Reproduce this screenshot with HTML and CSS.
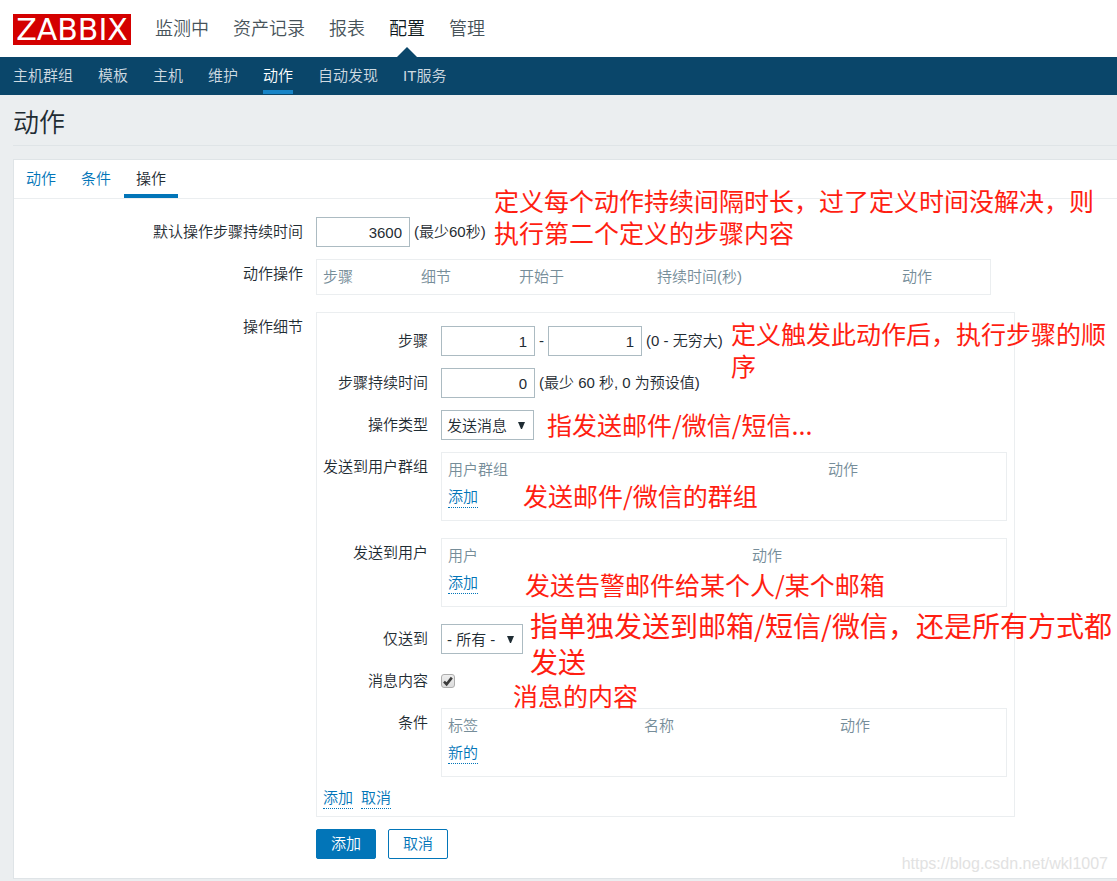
FILE: index.html
```html
<!DOCTYPE html>
<html lang="zh-CN">
<head>
<meta charset="utf-8">
<title>动作</title>
<link rel="stylesheet" href="styles.css">
</head>
<body>
<header class="top">
  <a class="logo" href="#">ZABBIX</a>
  <nav class="main-nav">
    <a href="#">监测中</a>
    <a href="#">资产记录</a>
    <a href="#">报表</a>
    <a class="active" href="#">配置</a>
    <a href="#">管理</a>
  </nav>
</header>
<nav class="sub-nav">
  <a href="#">主机群组</a>
  <a href="#">模板</a>
  <a href="#">主机</a>
  <a href="#">维护</a>
  <a class="active" href="#">动作</a>
  <a href="#">自动发现</a>
  <a href="#">IT服务</a>
</nav>
<main class="page">
  <h1 class="title">动作</h1>
  <div class="panel">
    <nav class="tabs">
      <a href="#">动作</a>
      <a href="#">条件</a>
      <a class="active" href="#">操作</a>
    </nav>
    <form class="form">
      <label class="label" for="period">默认操作步骤持续时间</label>
      <div class="field">
        <input class="number" id="period" type="text" value="3600">
        <span>(最少60秒)</span>
        <p class="note note-period">定义每个动作持续间隔时长，过了定义时间没解决，则<br>执行第二个定义的步骤内容</p>
      </div>

      <span class="label">动作操作</span>
      <table class="box operations">
        <colgroup><col class="w98"><col class="w98"><col class="w138"><col class="w245"><col></colgroup>
        <tr><th>步骤</th><th>细节</th><th>开始于</th><th>持续时间(秒)</th><th>动作</th></tr>
      </table>

      <span class="label">操作细节</span>
      <div class="details">
        <div class="rows">
          <label class="label" for="step-from">步骤</label>
          <div class="field">
            <input class="number" id="step-from" type="text" value="1">
            <span>-</span>
            <input class="number" type="text" value="1" aria-label="步骤">
            <span>(0 - 无穷大)</span>
            <p class="note note-steps">定义触发此动作后，执行步骤的顺<br>序</p>
          </div>

          <label class="label" for="step-period">步骤持续时间</label>
          <div class="field">
            <input class="number" id="step-period" type="text" value="0">
            <span>(最少 60 秒, 0 为预设值)</span>
          </div>

          <label class="label" for="op-type">操作类型</label>
          <div class="field">
            <span class="select select-type">
              <select id="op-type"><option>发送消息</option></select>
              <svg width="7" height="7" viewBox="0 0 7 7"><path d="M0 0h7L4 7H3z"/></svg>
            </span>
            <p class="note note-type">指发送邮件/微信/短信...</p>
          </div>

          <span class="label">发送到用户群组</span>
          <div class="field">
            <table class="box">
              <colgroup><col class="w380"><col></colgroup>
              <tr><th>用户群组</th><th>动作</th></tr>
              <tr><td colspan="2"><a class="link" href="#">添加</a></td></tr>
            </table>
            <p class="note note-groups">发送邮件/微信的群组</p>
          </div>

          <span class="label">发送到用户</span>
          <div class="field">
            <table class="box">
              <colgroup><col class="w304"><col></colgroup>
              <tr><th>用户</th><th>动作</th></tr>
              <tr><td colspan="2"><a class="link" href="#">添加</a></td></tr>
            </table>
            <p class="note note-users">发送告警邮件给某个人/某个邮箱</p>
          </div>

          <label class="label" for="media">仅送到</label>
          <div class="field">
            <span class="select select-media">
              <select id="media"><option>- 所有 -</option></select>
              <svg width="7" height="7" viewBox="0 0 7 7"><path d="M0 0h7L4 7H3z"/></svg>
            </span>
            <p class="note note-media">指单独发送到邮箱/短信/微信，还是所有方式都<br>发送</p>
          </div>

          <label class="label" for="message">消息内容</label>
          <div class="field">
            <span class="check">
              <input id="message" type="checkbox" checked>
              <svg width="14" height="14" viewBox="0 0 14 14"><path d="M3 7.6l2.6 2.6L10.8 3.6" fill="none" stroke="#3c3c3c" stroke-width="2.6"/></svg>
            </span>
            <p class="note note-message">消息的内容</p>
          </div>

          <span class="label">条件</span>
          <table class="box">
            <colgroup><col class="w196"><col class="w196"><col></colgroup>
            <tr><th>标签</th><th>名称</th><th>动作</th></tr>
            <tr><td colspan="3"><a class="link" href="#">新的</a></td></tr>
          </table>
        </div>
        <div class="links">
          <a class="link" href="#">添加</a>
          <a class="link" href="#">取消</a>
        </div>
      </div>

      <div class="buttons">
        <button class="button primary" type="submit">添加</button>
        <button class="button" type="button">取消</button>
      </div>
    </form>
    <p class="watermark">https://blog.csdn.net/wkl1007</p>
  </div>
</main>
</body>
</html>
```
FILE: styles.css
```css
* { box-sizing: border-box; }

body {
  margin: 0;
  background: #ebeef0;
  color: #1f2c33;
  font: 350 15px/20px "Liberation Sans", "Noto Sans CJK SC", sans-serif;
  overflow-x: hidden;
}

a { color: #0275b8; text-decoration: none; }

.top {
  display: flex;
  align-items: center;
  gap: 24px;
  height: 57px;
  padding: 0 13px;
  background: #fff;
}

.logo {
  width: 118px;
  margin-top: 2px;
  background: #d40000;
  color: #fff;
  font: 400 30px/31px "DejaVu Sans", sans-serif;
  text-align: center;
}

.main-nav { display: flex; gap: 24px; align-self: stretch; }
.main-nav a {
  position: relative;
  padding-top: 2px;
  color: #47535a;
  font-size: 18px;
  line-height: 55px;
}
.main-nav .active { color: #0f1a20; }
.main-nav .active::after {
  content: "";
  position: absolute;
  left: 50%;
  bottom: 0;
  margin-left: -10px;
  border: 10px solid transparent;
  border-top: 0;
  border-bottom-color: #0a466a;
}

.sub-nav {
  display: flex;
  gap: 25px;
  height: 38px;
  padding: 0 13px;
  background: #0a466a;
}
.sub-nav a {
  height: 37px;
  border-bottom: 4px solid transparent;
  color: #cfdae1;
  line-height: 37px;
}
.sub-nav .active { border-color: #1784c7; color: #fff; }

.page { padding: 0 0 3px 13px; }

.title {
  margin: 0 0 13px;
  padding: 10px 0 3px;
  border-bottom: 1px solid #dfe4e7;
  font-size: 26px;
  font-weight: 350;
  line-height: 37px;
}

.panel {
  position: relative;
  border: 1px solid #dfe4e7;
  border-right: 0;
  background: #fff;
}

.tabs {
  display: flex;
  gap: 1px;
  border-bottom: 1px solid #ebeef0;
}
.tabs a {
  height: 38px;
  padding: 0 12px;
  border-bottom: 4px solid transparent;
  line-height: 37px;
}
.tabs .active { border-color: #0275b8; color: #1f2c33; }

.form {
  display: grid;
  grid-template-columns: 289px 1fr;
  gap: 12px 13px;
  padding: 18px 0 19px;
}
.label { line-height: 30px; text-align: right; }

.field {
  position: relative;
  display: flex;
  align-items: center;
  gap: 4px;
  min-height: 30px;
}
.number {
  width: 94px;
  height: 30px;
  padding: 0 7px;
  border: 1px solid #acbbc2;
  background: #fff;
  color: inherit;
  font: inherit;
  text-align: right;
}

.box {
  width: 100%;
  margin-bottom: 5px;
  padding: 0 6px;
  border: 1px solid #ebeef0;
  border-spacing: 0;
  table-layout: fixed;
}
.operations { max-width: 675px; }
.box th {
  padding: 7px 0;
  color: #768d99;
  font-weight: inherit;
  text-align: left;
}
.box td { padding: 0 0 12px; vertical-align: top; }
.w98 { width: 98px; }
.w138 { width: 138px; }
.w245 { width: 245px; }
.w380 { width: 380px; }
.w304 { width: 304px; }
.w196 { width: 196px; }

.link {
  display: inline-block;
  border-bottom: 1px dotted #0275b8;
  vertical-align: top;
}

.details {
  max-width: 699px;
  padding: 13px 7px 7px 6px;
  border: 1px solid #ebeef0;
}
.rows {
  display: grid;
  grid-template-columns: 105px 1fr;
  gap: 12px 13px;
}
.links { display: flex; gap: 8px; margin-top: 6px; }

.select { position: relative; }
.select select {
  display: block;
  width: 100%;
  height: 30px;
  padding: 2px 5px 0;
  border: 1px solid #acbbc2;
  border-radius: 0;
  background: #fff;
  color: inherit;
  font: inherit;
  appearance: none;
}
.select svg {
  position: absolute;
  right: 9px;
  top: 12px;
  fill: #1f2c33;
  pointer-events: none;
}
.select-type { width: 93px; }
.select-media { width: 82px; }

.check { position: relative; width: 14px; height: 14px; }
.check input {
  display: block;
  width: 14px;
  height: 14px;
  margin: 0;
  border: 1px solid #adadad;
  border-radius: 3px;
  background: linear-gradient(#eee, #dcdcdc);
  appearance: none;
}
.check svg { position: absolute; left: 0; top: 0; pointer-events: none; }

.buttons { grid-column: 2; display: flex; gap: 12px; }
.button {
  width: 60px;
  height: 30px;
  padding: 0;
  border: 1px solid #0275b8;
  border-radius: 2px;
  background: #fff;
  color: #0275b8;
  font: inherit;
}
.primary { background: #0275b8; color: #fff; }

/* Red remarks written over the form */
.note {
  position: absolute;
  z-index: 1;
  margin: 0;
  color: #ff1e12;
  font: 400 25px/32px "Noto Sans CJK SC", sans-serif;
  white-space: nowrap;
}
.note-period { left: 178px; top: -33px; }
.note-steps { left: 290px; top: -9px; }
.note-type { left: 106px; top: -2px; }
.note-groups { left: 82px; top: 27px; }
.note-users { left: 84px; top: 30px; }
.note-media { left: 89px; top: -17px; font-size: 28px; line-height: 36px; }
.note-message { left: 72px; top: 13px; }

.watermark {
  position: absolute;
  right: 9px;
  bottom: 4px;
  margin: 0;
  color: #e2e2e2;
  font-size: 16px;
}
```
